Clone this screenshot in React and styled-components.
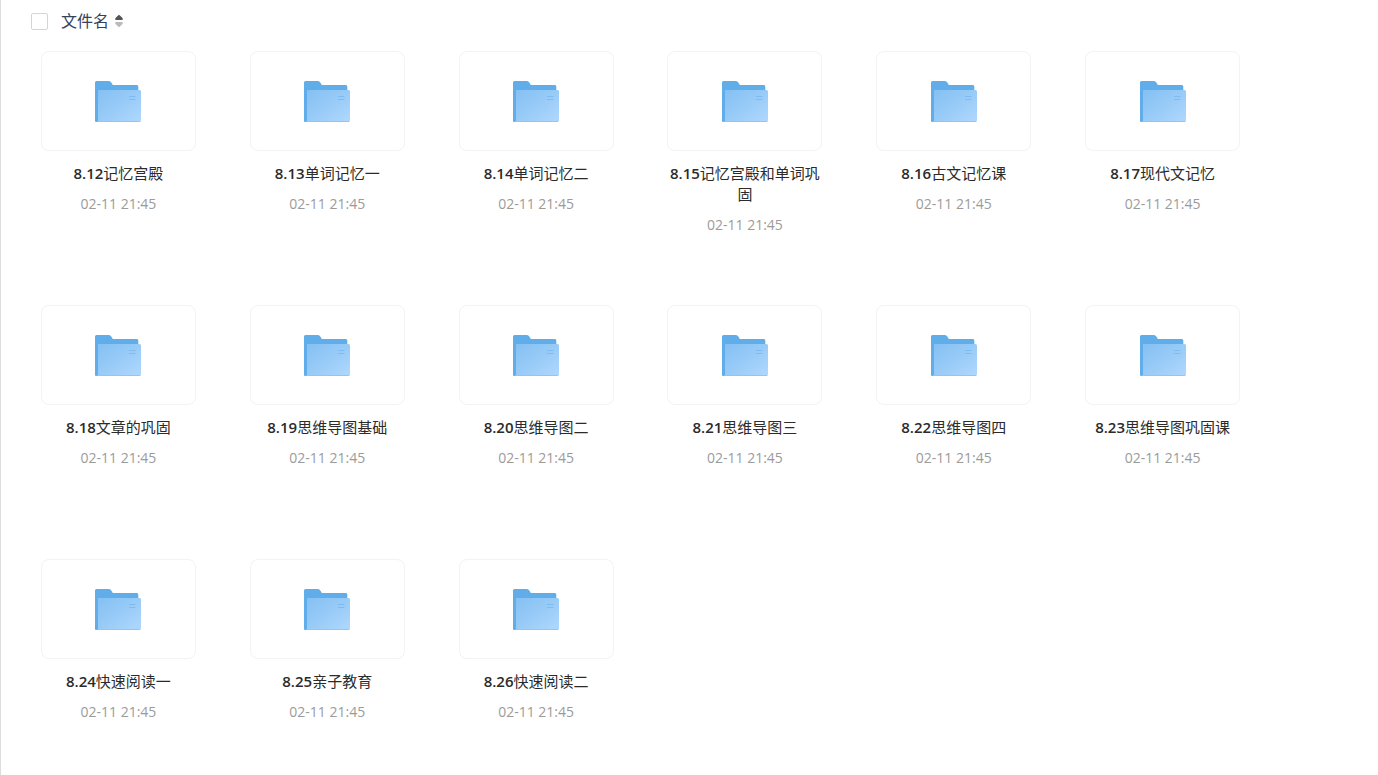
import React, { useState } from "react";
import styled, { createGlobalStyle } from "styled-components";

const GlobalStyle = createGlobalStyle`
  *, *::before, *::after { box-sizing: border-box; }
  body {
    margin: 0;
    background: #fff;
    font-family: "Open Sans", "Noto Sans CJK SC", sans-serif;
  }
`;

const Page = styled.main`
  min-height: 100vh;
  border-left: 1px solid #dcdcdc;
  background: #fff;
`;

const Toolbar = styled.header`
  display: flex;
  align-items: center;
  height: 42px;
  padding-left: 30px;
`;

const CheckAll = styled.input`
  appearance: none;
  flex: none;
  width: 17px;
  height: 17px;
  margin: 0 13px 0 0;
  border: 1px solid #d5d5d5;
  border-radius: 2px;
  background: #fff;
  cursor: pointer;

  &:checked {
    background: #63aeea;
    border-color: #63aeea;
  }
`;

const SortButton = styled.button`
  display: flex;
  align-items: center;
  gap: 6px;
  padding: 0;
  border: 0;
  background: none;
  color: #36425c;
  font-family: "Noto Sans CJK SC", sans-serif;
  font-size: 16px;
  line-height: 24px;
  cursor: pointer;
`;

const SortLabel = styled.span`
  padding-bottom: 2px;
`;

const FileGrid = styled.ul`
  display: grid;
  grid-template-columns: repeat(6, minmax(0, 1fr));
  grid-auto-rows: minmax(254px, auto);
  margin: 0;
  padding: 9px 111px 0 13px;
  list-style: none;
`;

const FileItem = styled.li`
  display: flex;
  flex-direction: column;
  align-items: center;
`;

const Thumb = styled.div`
  display: flex;
  align-items: center;
  justify-content: center;
  width: 155px;
  height: 100px;
  border: 1px solid #f3f3f3;
  border-radius: 8px;
`;

const FileName = styled.a`
  width: 155px;
  margin-top: 12px;
  color: #2b2b2b;
  font-size: 15px;
  line-height: 21px;
  text-align: center;
  text-decoration: none;
  word-break: break-all;
`;

const LessonNumber = styled.span`
  font-weight: 600;
`;

const FileTime = styled.time`
  margin-top: 9px;
  color: #9b9b9b;
  font-size: 14px;
  line-height: 22px;
`;

function SortIcon() {
  return (
    <svg width="8" height="14" viewBox="0 0 8 14" aria-hidden="true">
      <path d="M3.3 1.3Q4 .6 4.7 1.3L7.5 4Q8.3 5.8 7 6H1Q-.3 5.8.5 4Z" fill="#555" />
      <path d="M1 8H7Q8.3 8.2 7.5 10L4.7 12.7Q4 13.4 3.3 12.7L.5 10Q-.3 8.2 1 8Z" fill="#bbb" />
    </svg>
  );
}

function FolderIcon() {
  return (
    <svg width="46" height="42" viewBox="0 0 46 42" aria-hidden="true">
      <defs>
        <linearGradient id="folder-front" x1="0" y1="0" x2="1" y2="1">
          <stop offset="0" stopColor="#84c0f3" />
          <stop offset="0.5" stopColor="#98cbf7" />
          <stop offset="1" stopColor="#b0d8fe" />
        </linearGradient>
      </defs>
      <path d="M0 2.5Q0 1 1.5 1H14Q15.5 1 16.3 2.5L17.8 5H42Q43.3 5 43.3 6.5V41H0Z" fill="#60adea" />
      <path d="M3 10H44.5Q46 10 46 11.5V40.5Q46 42 44.5 42H2Q3 41.5 3 40Z" fill="url(#folder-front)" />
      <path d="M0 39.5V41Q0 42 1 42H2Q3 41.5 3 40.5V10H2V39.5Z" fill="#60adea" />
      <path d="M3 41.5H45" stroke="#91c6f3" strokeWidth="1" />
      <path d="M34 16.5H40.5M34 19.5H40.5" stroke="#7dbcf2" strokeWidth="1" />
    </svg>
  );
}

const folders = [
  { number: "8.12", title: "记忆宫殿" },
  { number: "8.13", title: "单词记忆一" },
  { number: "8.14", title: "单词记忆二" },
  { number: "8.15", title: "记忆宫殿和单词巩固" },
  { number: "8.16", title: "古文记忆课" },
  { number: "8.17", title: "现代文记忆" },
  { number: "8.18", title: "文章的巩固" },
  { number: "8.19", title: "思维导图基础" },
  { number: "8.20", title: "思维导图二" },
  { number: "8.21", title: "思维导图三" },
  { number: "8.22", title: "思维导图四" },
  { number: "8.23", title: "思维导图巩固课" },
  { number: "8.24", title: "快速阅读一" },
  { number: "8.25", title: "亲子教育" },
  { number: "8.26", title: "快速阅读二" },
];

export default function App() {
  const [allChecked, setAllChecked] = useState(false);
  return (
    <>
      <GlobalStyle />
      <Page>
        <Toolbar>
          <CheckAll
            type="checkbox"
            aria-label="全选"
            checked={allChecked}
            onChange={(e) => setAllChecked(e.target.checked)}
          />
          <SortButton type="button">
            <SortLabel>文件名</SortLabel>
            <SortIcon />
          </SortButton>
        </Toolbar>
        <FileGrid>
          {folders.map(({ number, title }) => (
            <FileItem key={number}>
              <Thumb>
                <FolderIcon />
              </Thumb>
              <FileName href="#">
                <LessonNumber>{number}</LessonNumber>
                {title}
              </FileName>
              <FileTime>02-11 21:45</FileTime>
            </FileItem>
          ))}
        </FileGrid>
      </Page>
    </>
  );
}
